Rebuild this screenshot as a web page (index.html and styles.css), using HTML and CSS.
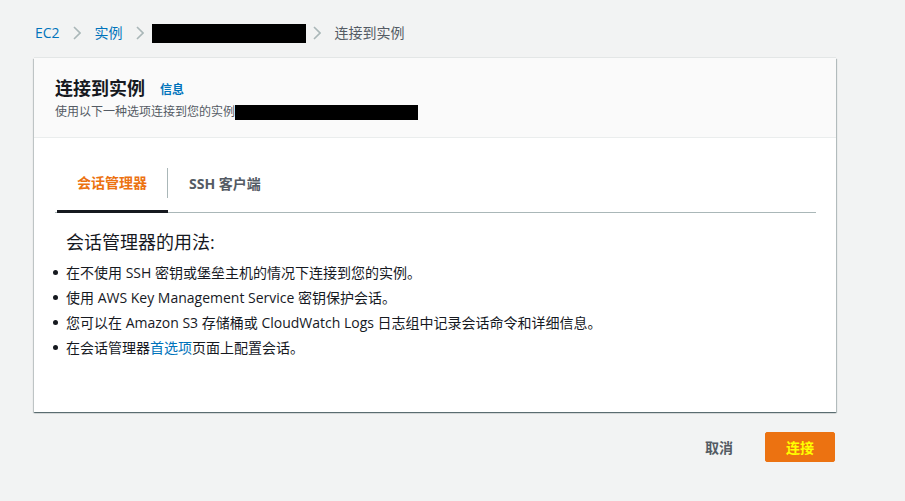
FILE: index.html
```html
<!DOCTYPE html>
<html lang="zh-CN">
<head>
<meta charset="utf-8">
<title>连接到实例</title>
<link rel="stylesheet" href="styles.css">
</head>
<body>
<nav class="breadcrumb">
  <a class="crumb link">EC2</a>
  <svg class="chev" width="8" height="14" viewBox="0 0 8 14"><path d="M1 1l6 6-6 6" fill="none" stroke="#aab7b8" stroke-width="1.6"/></svg>
  <a class="crumb link">实例</a>
  <svg class="chev" width="8" height="14" viewBox="0 0 8 14"><path d="M1 1l6 6-6 6" fill="none" stroke="#aab7b8" stroke-width="1.6"/></svg>
  <span class="redact redact-crumb"></span>
  <svg class="chev" width="8" height="14" viewBox="0 0 8 14"><path d="M1 1l6 6-6 6" fill="none" stroke="#aab7b8" stroke-width="1.6"/></svg>
  <span class="crumb current">连接到实例</span>
</nav>

<section class="card">
  <header class="card-header">
    <div class="title-row">
      <h1 class="title">连接到实例</h1>
      <a class="info">信息</a>
    </div>
    <div class="subtitle">使用以下一种选项连接到您的实例<span class="redact redact-sub"></span></div>
  </header>
  <div class="card-body">
    <div class="tabs">
      <div class="tab active"><span class="tab-label">会话管理器</span></div>
      <div class="tab second"><span class="tab-label last">SSH 客户端</span></div>
    </div>
    <h2 class="usage">会话管理器的用法:</h2>
    <ul class="bullets">
      <li>在不使用 SSH 密钥或堡垒主机的情况下连接到您的实例。</li>
      <li>使用 AWS Key Management Service 密钥保护会话。</li>
      <li>您可以在 Amazon S3 存储桶或 CloudWatch Logs 日志组中记录会话命令和详细信息。</li>
      <li>在会话管理器<a class="link">首选项</a>页面上配置会话。</li>
    </ul>
  </div>
</section>

<div class="actions">
  <button class="btn btn-cancel">取消</button>
  <button class="btn btn-primary">连接</button>
</div>
</body>
</html>
```

FILE: styles.css
```css
html, body {
  margin: 0;
  padding: 0;
}
body {
  background: #f2f3f3;
  font-family: "Open Sans", "Noto Sans CJK SC", sans-serif;
  color: #16191f;
  width: 905px;
  height: 501px;
  overflow: hidden;
}
.link {
  color: #0073bb;
  text-decoration: none;
}
.breadcrumb {
  display: flex;
  align-items: center;
  height: 20px;
  padding: 23px 0 0 35px;
  font-size: 14px;
  line-height: 20px;
}
.crumb.current {
  color: #545b64;
}
.chev {
  margin: 0 14px 0 13px;
}
.redact {
  display: inline-block;
  background: #000;
}
.redact-crumb {
  width: 154px;
  height: 19px;
  margin-left: -6px;
  margin-right: -6px;
}
.card {
  margin: 15px 0 0 34px;
  width: 802px;
  background: #fff;
  box-shadow: 0 1px 1px 0 rgba(0, 28, 36, 0.45), 1px 1px 1px 0 rgba(0, 28, 36, 0.2), -1px 1px 1px 0 rgba(0, 28, 36, 0.15), 0 -1px 0 0 rgba(0, 28, 36, 0.06);
}
.card-header {
  background: #fafafa;
  border-bottom: 1px solid #eaeded;
  padding: 17px 21px 0;
  height: 62px;
}
.title-row {
  display: flex;
  align-items: center;
  height: 26px;
}
.title {
  margin: 0;
  font-size: 18px;
  font-weight: 700;
  line-height: 26px;
}
.info {
  margin-left: 15px;
  font-size: 12px;
  font-weight: 700;
  color: #0073bb;
  padding-top: 2px;
}
.subtitle {
  display: flex;
  align-items: center;
  font-size: 12px;
  line-height: 18px;
  color: #545b64;
  margin-top: 2px;
}
.redact-sub {
  width: 183px;
  height: 15px;
}
.card-body {
  padding: 18px 20px 52px 21px;
}
.tabs {
  display: flex;
  border-bottom: 1px solid #aab7b8;
  padding-left: 2px;
}
.tab {
  display: flex;
  align-items: center;
  height: 55px;
  padding-left: 20px;
  font-size: 14px;
  font-weight: 700;
  color: #545b64;
  border-bottom: 2px solid transparent;
  margin-bottom: -1px;
}
.tab.second {
  padding-left: 21px;
}
.tab.active {
  color: #ec7211;
  border-bottom: 3px solid #16191f;
  height: 54px;
}
.tab-label {
  line-height: 30px;
  padding-right: 20px;
  border-right: 1px solid #aab7b8;
}
.tab-label.last {
  border-right: none;
}
.usage {
  margin: 17px 0 0 11px;
  font-size: 18px;
  font-weight: 400;
  line-height: 24px;
}
.bullets {
  list-style: none;
  margin: 6px 0 0 -2px;
  padding: 0;
  font-size: 14px;
  line-height: 25px;
}
.bullets li {
  display: flex;
  align-items: center;
}
.bullets li::before {
  content: "";
  width: 5px;
  height: 5px;
  border-radius: 50%;
  background: #16191f;
  margin-right: 8px;
  flex: none;
}
.actions {
  display: flex;
  justify-content: flex-end;
  align-items: center;
  width: 835px;
  margin-top: 20px;
  gap: 12px;
}
.btn {
  font-family: inherit;
  font-size: 14px;
  font-weight: 700;
  border-radius: 2px;
  height: 30px;
  cursor: pointer;
}
.btn-cancel {
  background: transparent;
  border: none;
  color: #545b64;
  padding: 0 20px;
}
.btn-primary {
  width: 70px;
  background: #ec7211;
  border: 1px solid #ec7211;
  color: #ffff00;
  padding: 0;
}
```
